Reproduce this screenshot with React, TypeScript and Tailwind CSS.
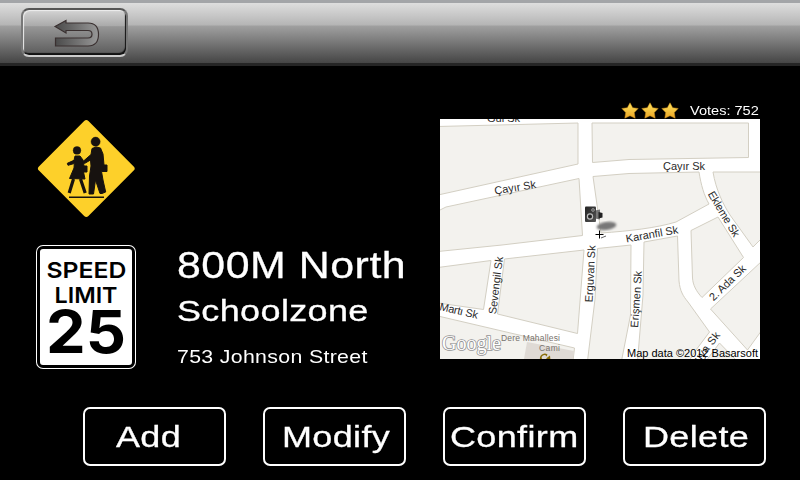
import React from "react";

const font = "font-['Liberation_Sans',Arial,sans-serif]";

function BackIcon() {
  return (
    <svg viewBox="0 0 46 28" className="ml-[5px] h-[28px] w-[46px]">
      <defs>
        <linearGradient id="arrow" x1="0" y1="0" x2="1" y2="0">
          <stop offset="0" stopColor="#4a4a4a" />
          <stop offset="0.5" stopColor="#707070" />
          <stop offset="1" stopColor="#989898" />
        </linearGradient>
      </defs>
      <path
        d="M1 7.500 12 1.500V4H34C41 4 44.500 8.500 44.500 15.500S41 27 34 27H1.500V19H34c2.500 0 4-1.300 4-3.700s-1.500-3.800-4-3.800H12v2.500z"
        fill="url(#arrow)"
        stroke="#3a3030"
        strokeWidth="1.2"
      />
    </svg>
  );
}

function SchoolSign() {
  return (
    <svg viewBox="0 0 100 100" className="block h-[100px] w-[100px]">
      <rect x="15.300" y="15.500" width="70" height="70" rx="3" transform="rotate(45 50.300 50.500)" fill="#fdd02a" />
      <g fill="#17120f" stroke="#17120f" strokeLinejoin="round">
        <circle cx="41" cy="32.400" r="3.900" strokeWidth="0.4" />
        <circle cx="59.600" cy="23.700" r="4.600" strokeWidth="0.4" />
        <path d="M39 38h5l3 4 1 6h3v6h-3.500l1.500 7-15.500-.5L38 50l.3-4.500-6.300 1.800-.7-2 6.700-3z" strokeWidth="1" />
        <path d="m37.500 61-4.300 14M44.500 61l4.700 14" fill="none" strokeWidth="3.200" />
        <path d="m56 30.500 4-1.500 4.500 1L67 36l1 11h3v6.500h-5.500L67 62l2.700 12-3.700 1.500-2 0L59.500 62 57.500 76H53L53.500 58l1.500-10-.5-6-6 3.500-1.500-2 8-7z" strokeWidth="1" />
        <path d="M33 79.300h35" fill="none" strokeWidth="1.500" />
      </g>
    </svg>
  );
}

function SpeedSign() {
  return (
    <div className="h-[124px] w-[100px] rounded-[7px] bg-white p-px">
      <div className="h-full rounded-[6px] border-[3px] border-black bg-white">
        <svg viewBox="0 0 92 116" className="block h-[116px] w-[92px]">
          <g fontFamily="Inter,'Liberation Sans',sans-serif" fill="#000">
            <text x="6.500" y="28.700" fontSize="22" fontWeight="600" textLength="80" lengthAdjust="spacingAndGlyphs">SPEED</text>
            <text x="14.500" y="53.700" fontSize="22" fontWeight="600" textLength="63" lengthAdjust="spacingAndGlyphs">LIMIT</text>
            <text x="6" y="104" fontSize="58.500" fontWeight="700" textLength="80" lengthAdjust="spacingAndGlyphs">25</text>
          </g>
        </svg>
      </div>
    </div>
  );
}

function Star() {
  return (
    <svg viewBox="0 0 18 17" className="h-[17px] w-[18px]">
      <defs>
        <linearGradient id="gold" x1="0" y1="0" x2="0" y2="1">
          <stop offset="0" stopColor="#ffe45e" />
          <stop offset="1" stopColor="#eba423" />
        </linearGradient>
      </defs>
      <path d="m9 .8 2.700 4.900 5.500.8-3.900 4 .9 5.700L9 13.800l-5.200 2.400.9-5.700-3.900-4 5.500-.8z" fill="url(#gold)" stroke="#c98a1a" strokeWidth=".5" strokeLinejoin="round" />
    </svg>
  );
}

// City blocks; the streets are the white gaps between them.
const blocks = [
  "M-2 7.500 138 4v41L-2 76z",
  "M152 4H308.500V38.500L189 40.500 152.500 43.500z",
  "M-2 92 6 88 139 59.500 142.500 116.500 62 126 -2 132.500z",
  "M153 57.500 189 54.500 259 53C261 66 264 76 269 85L236 103C216 109 190 112 161 114z",
  "M273 53H322V119L313 128 290 96C283 85 276 71 273 53z",
  "M-2 148.500 51 141.500 43.500 190.500 -2 184z",
  "M64.500 140 144 131 137.500 214.500 57.500 195z",
  "M-2 197 134.500 229 133 242H-2z",
  "M157.500 129.500 191 126 190.500 196 181.500 242H147.500L155 180z",
  "M204 123 237.500 117 239 162C240 172 243 177 248 183L269.500 213 256 231 249 242H197.500L203 176z",
  "M251 111.500 278 98 303.500 138.500 262 178.500C256 172 253 166 252.500 159z",
  "M322 142 270.500 190 307.500 231 322 211z",
  "M279.500 224 297 242H266z",
];

function StreetMap() {
  return (
    <svg viewBox="0 0 320 240" className="block h-[240px] w-[320px]">
      <defs>
        <filter id="shadow"><feGaussianBlur stdDeviation="1" /></filter>
        <linearGradient id="camera" x1="0" y1="0" x2="1" y2="1">
          <stop offset="0" stopColor="#222" />
          <stop offset="1" stopColor="#555" />
        </linearGradient>
      </defs>
      <rect width="320" height="240" fill="#fff" />
      <g fill="#f3f2ee" stroke="#d3cfc3" strokeWidth="1">
        {blocks.map((d) => <path key={d} d={d} />)}
      </g>
      <path d="M87 223 134 232 133 240H84z" fill="#dfdad5" />
      <g fill="#2a2a2a" fontFamily="'Liberation Sans',Arial,sans-serif" fontSize="11">
        <text x="47" y="2.500" textLength="33">Gül Sk</text>
        <text transform="translate(55 75.500) rotate(-9)" textLength="42">Çayır Sk</text>
        <text x="223" y="50.500" textLength="42">Çayır Sk</text>
        <text transform="translate(186.500 123.500) rotate(-10)" textLength="53">Karanfil Sk</text>
        <text transform="translate(267.500 75) rotate(59)" textLength="51">Ekleme Sk</text>
        <text transform="translate(56 195.500) rotate(-83)" textLength="58">Sevengil Sk</text>
        <text transform="translate(152.500 183.500) rotate(-87)" textLength="57">Erguvan Sk</text>
        <text transform="translate(198 209) rotate(-86)" textLength="57">Erişmen Sk</text>
        <text transform="translate(-1 191) rotate(13)" textLength="39">Martı Sk</text>
        <text transform="translate(273.500 182.500) rotate(-44)" textLength="46">2. Ada Sk</text>
        <text transform="translate(259 244) rotate(-52)" textLength="35">uya Sk</text>
      </g>
      <g fill="#77736e" fontFamily="'Liberation Sans',Arial,sans-serif" fontSize="8.500">
        <text x="61" y="222" textLength="59">Dere Mahallesi</text>
        <text x="99" y="232" textLength="21">Cami</text>
      </g>
      <path d="M107.500 235.500a4.800 4.800 0 1 0 1.500 6l-3-1a2.500 2.500 0 1 1 .5-3zM106 239.500l4-3 .5 5z" fill="#8a6f0a" />
      <text x="2" y="230.500" fontFamily="'Liberation Serif',serif" fontSize="22" fill="#fff" stroke="#949494" strokeWidth="1.700" paintOrder="stroke" textLength="59" lengthAdjust="spacingAndGlyphs">Google</text>
      <ellipse cx="166.500" cy="107" rx="10" ry="4" transform="rotate(-8 166 107)" fill="#777" filter="url(#shadow)" />
      <path d="M155 91.500l5-1v10l-5-1z" fill="#777" />
      <path d="m158.500 93 4 1v4.500l-4 1z" fill="#222" />
      <rect x="145" y="87.500" width="11" height="15.500" rx="1" fill="url(#camera)" />
      <circle cx="150" cy="97.500" r="2.600" fill="#222" stroke="#bbb" strokeWidth="1.200" />
      <circle cx="153" cy="91" r="1.400" fill="#555" stroke="#aaa" strokeWidth=".7" />
      <path d="M155.500 115.500h8M159.500 111.500v8" stroke="#000" />
      <path d="m161 119 5-2" stroke="#666" />
      <text x="187" y="237.500" fontFamily="'Liberation Sans',Arial,sans-serif" fontSize="11" textLength="131" fill="#000">Map data ©2012 Basarsoft</text>
    </svg>
  );
}

const actions = [
  { label: "Add", pad: "pl-[31px]" },
  { label: "Modify", pad: "pl-[17px]" },
  { label: "Confirm", pad: "pl-[5px]" },
  { label: "Delete", pad: "pl-[18px]" },
];

export default function App() {
  return (
    <div className={`flex h-[480px] w-[800px] flex-col overflow-hidden bg-black text-white ${font}`}>
      <header className="h-[66px] shrink-0 border-t-[3px] border-b-[3px] border-t-[#a3a5a8] border-b-[#252525] bg-[linear-gradient(#dedede_0px,#b5b5b5_22px,#a0a0a0_23px,#454545_60px)] pt-[5px] pl-[21px]">
        <button className="flex h-[49px] w-[107px] items-center justify-center rounded-[8px] border-2 border-t-[#555] border-r-[#777] border-b-[#ccc] border-l-[#777] bg-[linear-gradient(#d4d4d4,#aaa_35%,#969696_37%,#5b5b5b)] shadow-[inset_-1px_-2px_1px_#111,inset_1px_1px_1px_#eee]">
          <BackIcon />
        </button>
      </header>

      <main className="flex h-[341px] shrink-0 pl-[36px]">
        <div className="flex w-[141px] flex-col pt-[52px]">
          <SchoolSign />
          <div className="mt-[27px]"><SpeedSign /></div>
        </div>
        <div className="flex w-[263px] flex-col pt-[179px] whitespace-nowrap">
          <h1 className="h-[42px] origin-left scale-x-[1.19] text-[36px] leading-[42px] tracking-[0.45px] [-webkit-text-stroke:0.3px_white]">800M North</h1>
          <h2 className="mt-[6px] h-[36px] origin-left scale-x-[1.2] text-[30px] leading-[36px] tracking-[0.3px] [-webkit-text-stroke:0.3px_white]">Schoolzone</h2>
          <p className="mt-[17px] h-[22px] origin-left scale-x-[1.15] text-[18.5px] leading-[22px] tracking-[0.3px]">753 Johnson Street</p>
        </div>
        <section className="w-[320px] pt-[35px]">
          <div className="flex h-[18px] items-center pl-[181px]">
            <div className="flex gap-[2px]">
              <Star />
              <Star />
              <Star />
            </div>
            <span className="mt-[2px] ml-[11px] origin-left scale-x-[1.12] text-[13px] leading-[18px] whitespace-nowrap">Votes: 752</span>
          </div>
          <StreetMap />
        </section>
      </main>

      <nav className="flex gap-[37px] pl-[83px]">
        {actions.map(({ label, pad }) => (
          <button key={label} className={`flex h-[59px] w-[143px] items-center rounded-[7px] border-2 border-white text-left ${pad}`}>
            <span className="origin-left scale-x-[1.2] text-[30px] leading-[36px] tracking-[0.3px] [-webkit-text-stroke:0.3px_white]">{label}</span>
          </button>
        ))}
      </nav>
    </div>
  );
}
